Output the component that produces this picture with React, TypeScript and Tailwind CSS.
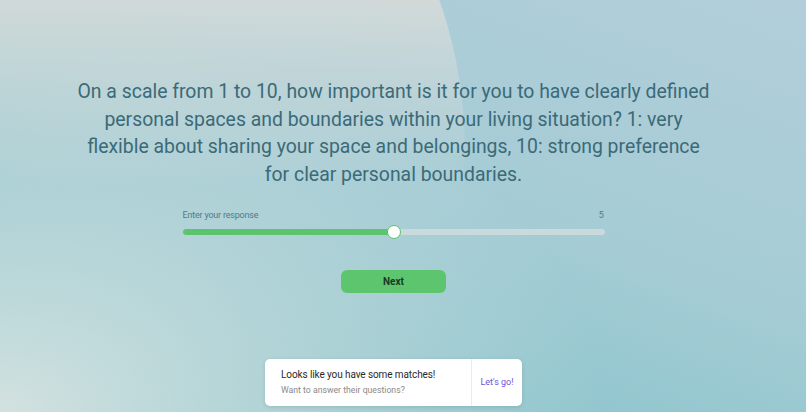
import { useState } from "react";

function ResponseSlider(props: { value: number; min: number; max: number }) {
    const { value, min, max } = props;
    const pct = ((value - min) / (max - min)) * 100;
    return (
        <div className="w-[422px] flex flex-col">
            <div className="flex justify-between text-[9px] tracking-[-0.2px] text-[#4f7c87] leading-none">
                <span>Enter your response</span>
                <span className="pr-[1px]">{value}</span>
            </div>
            <div className="relative mt-[9px] h-[6px] w-full rounded-full bg-[#d3dcdd]/80">
                <div className="h-full rounded-full bg-[#5cc46d]" style={{ width: `${pct}%` }} />
                <div
                    className="absolute top-1/2 w-[14px] h-[14px] -translate-x-1/2 -translate-y-1/2 rounded-full bg-white border-[1.5px] border-[#5cc46d]"
                    style={{ left: `${pct}%` }}
                />
            </div>
        </div>
    );
}

function MatchToast() {
    return (
        <div className="w-[257px] h-[47px] flex bg-white rounded-[5px] shadow-[0_1px_4px_rgba(0,0,0,0.12)]">
            <div className="flex-1 flex flex-col justify-center pl-4">
                <div className="text-[10px] tracking-[-0.1px] text-[#2a2a2a] leading-[14px]">Looks like you have some matches!</div>
                <div className="text-[8.7px] text-[#8a8a8a] leading-[13px] mt-[2px]">Want to answer their questions?</div>
            </div>
            <div className="w-[51px] border-l border-[#ececec] flex items-center justify-center">
                <span className="text-[9px] text-[#6a56d8]">Let's go!</span>
            </div>
        </div>
    );
}

export default function App() {
    const [value] = useState(5);
    return (
        <div
            className="relative w-[806px] h-[412px] overflow-hidden bg-[linear-gradient(200deg,#b2cedb_0%,#a5ccd5_45%,#7abfc6_100%)]"
            style={{ fontFamily: "Roboto, 'Noto Sans', sans-serif" }}
        >
            {/* light wash bottom left */}
            <div className="absolute inset-0 bg-[radial-gradient(ellipse_75%_95%_at_0%_100%,rgba(218,228,226,0.92),rgba(218,228,226,0)_100%)]" />
            {/* big light blob on the left */}
            <div className="absolute left-[-465px] top-[-300px] w-[930px] h-[900px] rounded-full bg-[linear-gradient(180deg,rgba(222,221,216,0.95)_28%,rgba(216,221,218,0.55)_40%,rgba(210,222,220,0)_54%)]" />

            <div className="relative w-[787px] h-full flex flex-col items-center">
                <h1 className="mt-[78px] w-[700px] text-center text-[19.4px] leading-[27.5px] text-[#3b6a78]">
                    On a scale from 1 to 10, how important is it for you to have clearly defined
                    <br />
                    personal spaces and boundaries within your living situation? 1: very
                    <br />
                    flexible about sharing your space and belongings, 10: strong preference
                    <br />
                    for clear personal boundaries.
                </h1>

                <div className="mt-[23px]">
                    <ResponseSlider value={value} min={0} max={10} />
                </div>

                <button className="mt-[35px] w-[105px] h-[23px] rounded-[6px] bg-[#5dc56e] text-[10px] font-bold text-[#173a24]">
                    Next
                </button>

                <div className="mt-[66px]">
                    <MatchToast />
                </div>
            </div>
        </div>
    );
}
